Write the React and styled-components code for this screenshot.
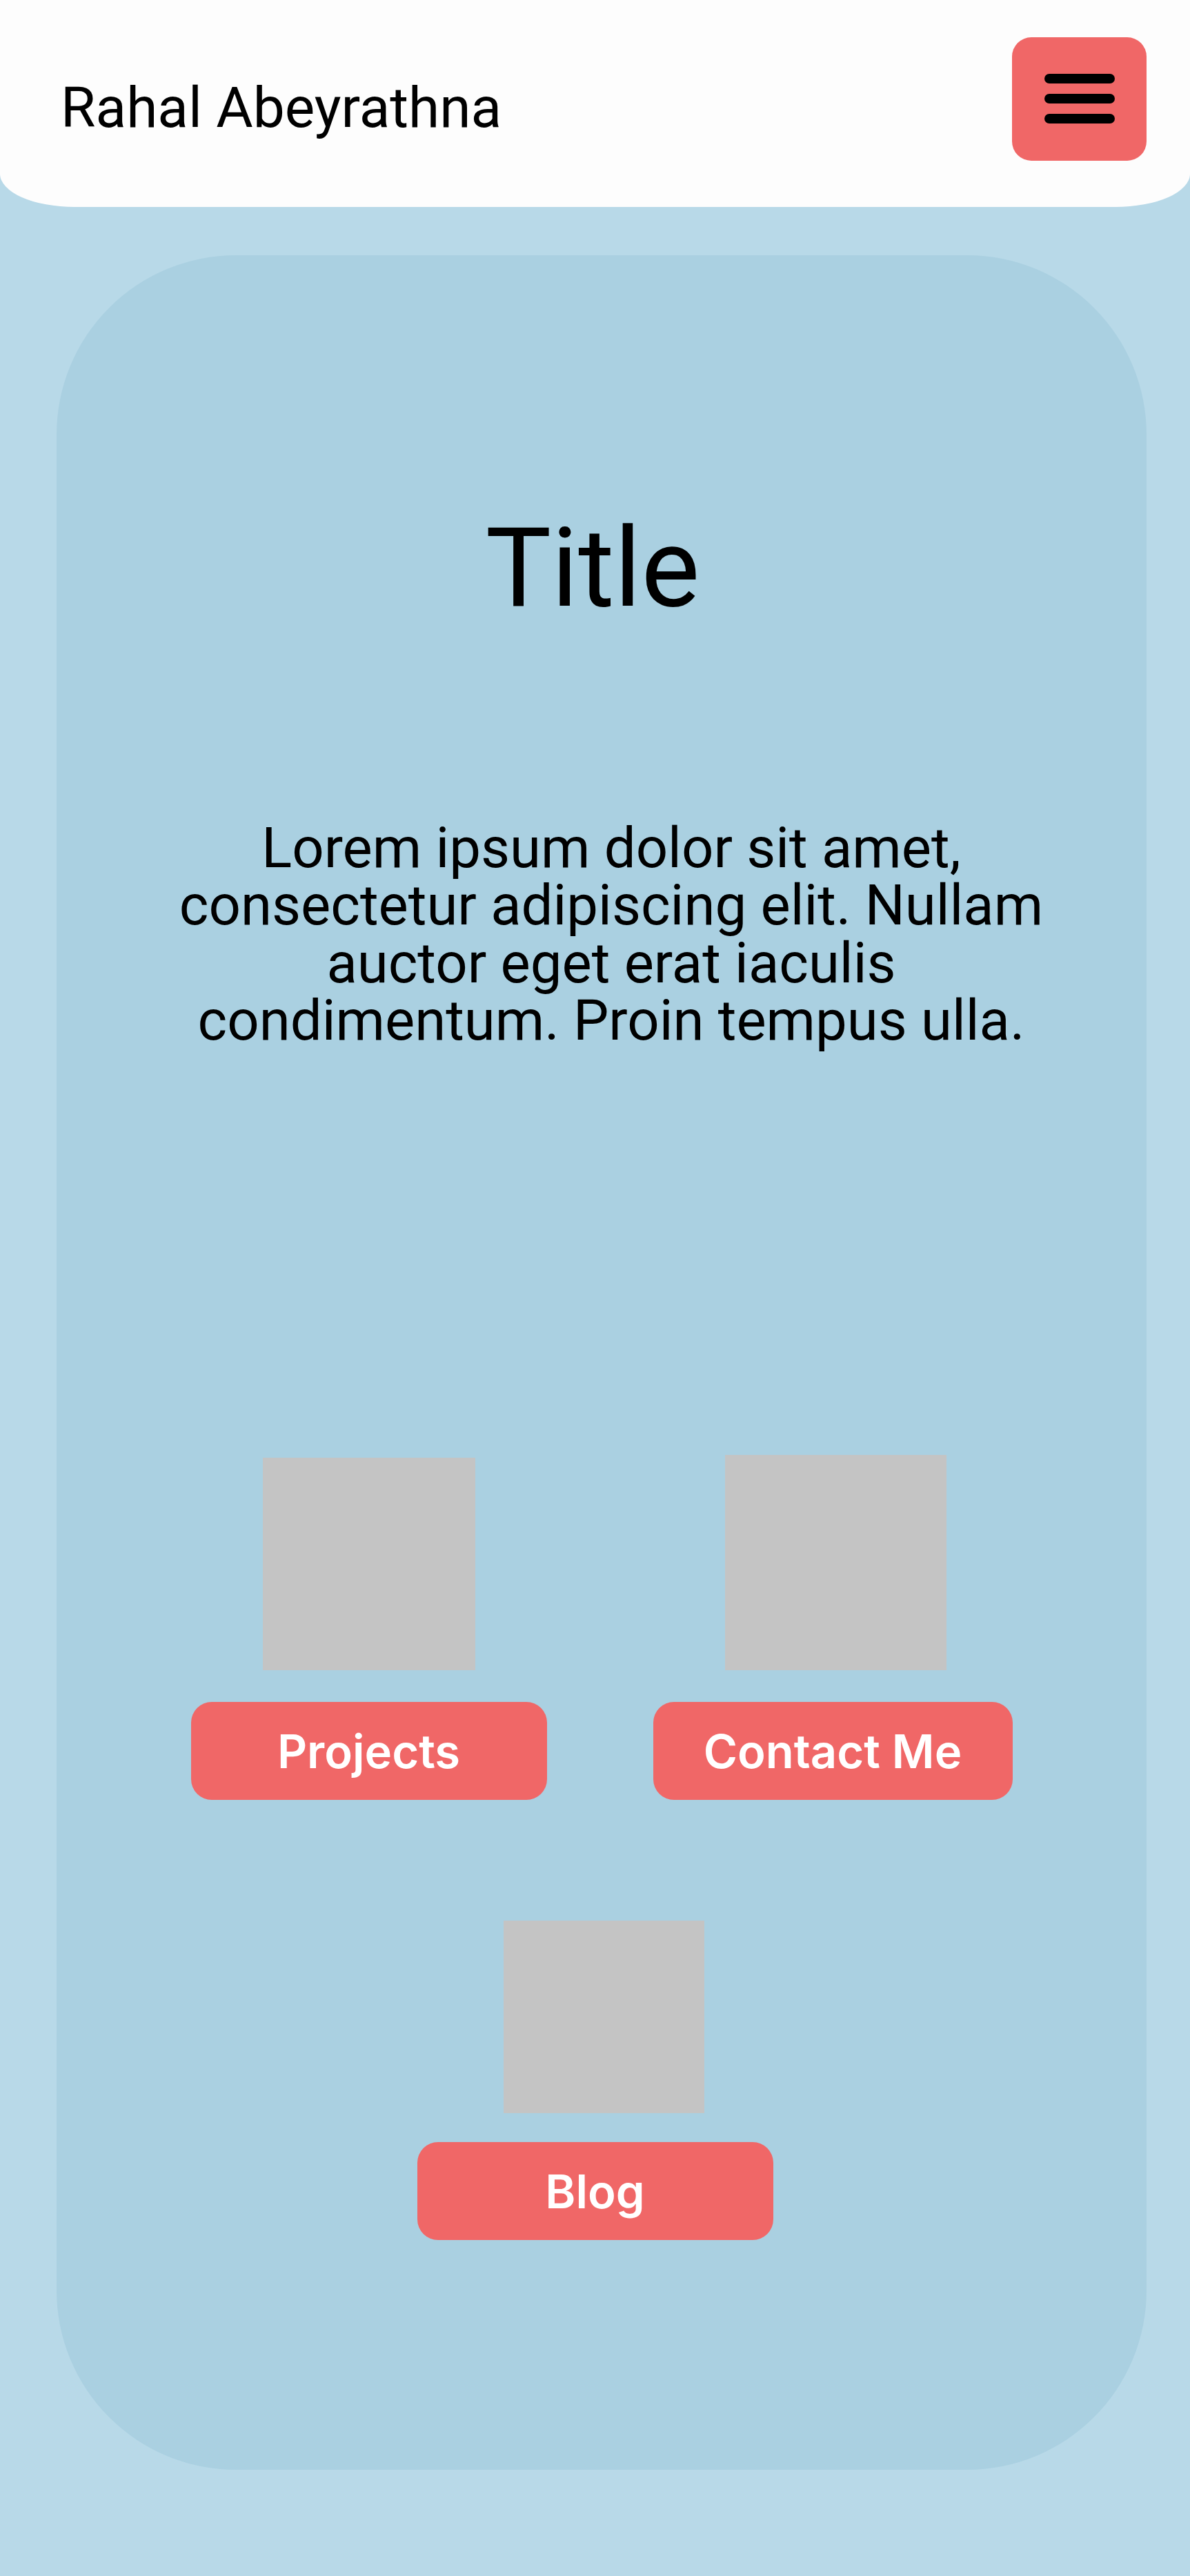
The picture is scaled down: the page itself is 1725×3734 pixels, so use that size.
import React from "react";
import styled, { createGlobalStyle } from "styled-components";

const GlobalStyle = createGlobalStyle`
  html, body {
    margin: 0;
    padding: 0;
    background: #b8d9e8;
  }
  body {
    font-family: Roboto, "Liberation Sans", sans-serif;
    color: #000;
  }
  * { box-sizing: border-box; }
`;

const Page = styled.div`
  display: flex;
  flex-direction: column;
  min-height: 3734px;
  background: #b8d9e8;
`;

const Header = styled.header`
  height: 300px;
  background: #fdfdfd;
  border-radius: 0 0 108px 108px / 0 0 48px 48px;
  display: flex;
  align-items: center;
  justify-content: space-between;
  padding: 0 63px 0 88px;
`;

const Brand = styled.div`
  font-family: Roboto, "Liberation Sans", sans-serif;
  font-size: 82px;
  font-weight: 400;
  margin-top: 12px;
  letter-spacing: 0;
`;

const MenuButton = styled.button`
  width: 195px;
  height: 179px;
  border: none;
  border-radius: 28px;
  background: #f06767;
  display: flex;
  flex-direction: column;
  align-items: center;
  justify-content: center;
  gap: 15px;
  margin-top: -13px;
  padding: 0 0 2px 0;
  cursor: pointer;
`;

const MenuLine = styled.span`
  display: block;
  width: 102px;
  height: 14px;
  border-radius: 7px;
  background: #000;
`;

const Card = styled.main`
  margin: 70px 63px 155px 82px;
  background: #aad0e1;
  border-radius: 260px;
  padding: 374px 0 333px;
  display: flex;
  flex-direction: column;
  align-items: center;
`;

const Title = styled.h1`
  margin: 0 26px 0 0;
  font-family: Roboto, "Liberation Sans", sans-serif;
  font-weight: 400;
  font-size: 160px;
  line-height: 160px;
`;

const Lead = styled.p`
  margin: 284px 0 0 28px;
  width: 1300px;
  text-align: center;
  font-family: Roboto, "Liberation Sans", sans-serif;
  font-size: 81.5px;
  line-height: 83.3px;
  font-weight: 400;
`;

const LinkGrid = styled.div`
  margin-top: ${(p) => p.$top}px;
  margin-right: ${(p) => p.$pull || 0}px;
  display: grid;
  grid-template-columns: ${(p) => p.$cols};
  column-gap: 154px;
  justify-content: center;
  align-items: end;
`;

const LinkItem = styled.div`
  display: flex;
  flex-direction: column;
  align-items: center;
`;

const Thumb = styled.div`
  width: ${(p) => p.$w}px;
  height: ${(p) => p.$h}px;
  background: #c4c4c4;
  margin-left: ${(p) => p.$shift || 0}px;
`;

const LinkButton = styled.button`
  margin-top: ${(p) => p.$gap}px;
  width: ${(p) => p.$w}px;
  height: 142px;
  border: none;
  border-radius: 30px;
  background: #f06767;
  color: #fff;
  font-family: Inter, Roboto, "Liberation Sans", sans-serif;
  font-weight: 600;
  font-size: 67px;
  line-height: 1;
  display: flex;
  align-items: center;
  justify-content: center;
  padding: 0;
  cursor: pointer;
`;

export default function App() {
  return (
    <Page>
      <GlobalStyle />
      <Header>
        <Brand>Rahal Abeyrathna</Brand>
        <MenuButton aria-label="Menu">
          <MenuLine />
          <MenuLine />
          <MenuLine />
        </MenuButton>
      </Header>
      <Card>
        <Title>Title</Title>
        <Lead>
          Lorem ipsum dolor sit amet, consectetur adipiscing elit. Nullam
          auctor eget erat iaculis condimentum. Proin tempus ulla.
        </Lead>
        <LinkGrid $top={588} $cols="516px 521px">
          <LinkItem>
            <Thumb $w={308} $h={308} />
            <LinkButton $gap={46} $w={516}>Projects</LinkButton>
          </LinkItem>
          <LinkItem>
            <Thumb $w={321} $h={312} $shift={8} />
            <LinkButton $gap={46} $w={521}>Contact Me</LinkButton>
          </LinkItem>
        </LinkGrid>
        <LinkGrid $top={175} $cols="516px" $pull={19}>
          <LinkItem>
            <Thumb $w={291} $h={279} $shift={25} />
            <LinkButton $gap={42} $w={516}>Blog</LinkButton>
          </LinkItem>
        </LinkGrid>
      </Card>
    </Page>
  );
}
